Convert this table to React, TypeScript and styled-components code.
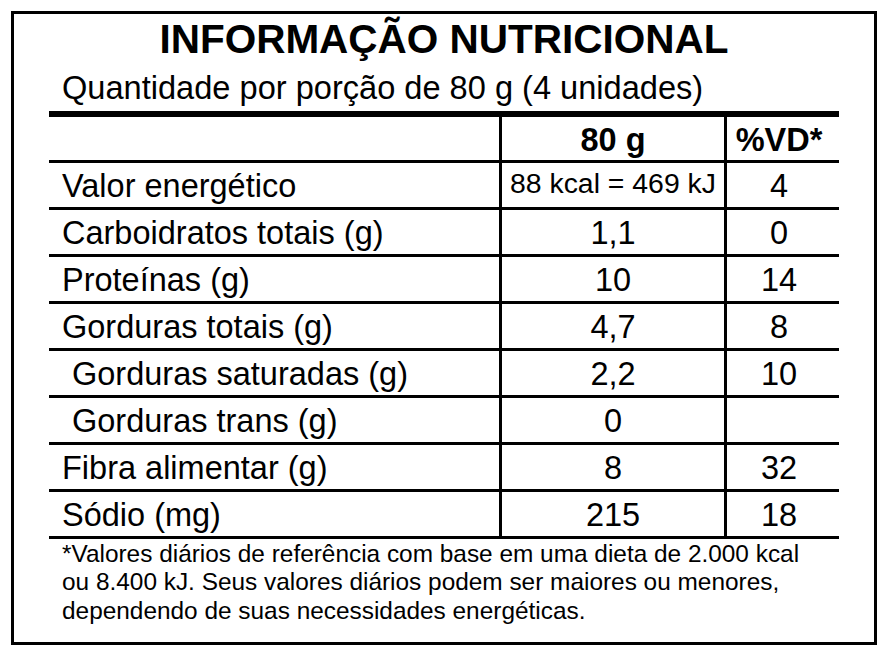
import React, {FC} from 'react';
import styled, {createGlobalStyle, css} from 'styled-components';

/*
 * Data.
 */

interface NutrientRow {
  label: string;
  amount: string;
  dailyValue: string;
  /** Sub-items of a nutrient are shifted to the right. */
  indented?: boolean;
  /** Long values use a smaller font so they fit the column. */
  compact?: boolean;
}

const rows: NutrientRow[] = [
  {label: 'Valor energético', amount: '88 kcal = 469 kJ', dailyValue: '4', compact: true},
  {label: 'Carboidratos totais (g)', amount: '1,1', dailyValue: '0'},
  {label: 'Proteínas (g)', amount: '10', dailyValue: '14'},
  {label: 'Gorduras totais (g)', amount: '4,7', dailyValue: '8'},
  {label: 'Gorduras saturadas (g)', amount: '2,2', dailyValue: '10', indented: true},
  {label: 'Gorduras trans (g)', amount: '0', dailyValue: '', indented: true},
  {label: 'Fibra alimentar (g)', amount: '8', dailyValue: '32'},
  {label: 'Sódio (mg)', amount: '215', dailyValue: '18'},
];

/*
 * Style.
 */

const GlobalStyle = createGlobalStyle`
  html, body {
    margin: 0;
    padding: 0;
    background: #ffffff;
  }
  body {
    font-family: "Liberation Sans", Arial, sans-serif;
    color: #000000;
  }
`;

const StyledLabelBoxDiv = styled.div`
  box-sizing: border-box;
  width: 866px;
  margin: 11px;
  border: 3px solid #000;
  padding: 3px 35px 17px;
  display: flex;
  flex-direction: column;
`;

const StyledTitleH1 = styled.h1`
  margin: 0;
  font-size: 40.5px;
  line-height: 44px;
  font-weight: 700;
  text-align: center;
`;

const StyledServingDiv = styled.div`
  margin-top: 9px;
  padding-left: 13px;
  font-size: 32.6px;
  line-height: 36px;
`;

const StyledTableDiv = styled.div`
  margin-top: 5px;
  border-top: 6px solid #000;
  display: flex;
  flex-direction: column;
`;

interface StyledRowDivProps {
  $isHeader?: boolean;
}

const StyledRowDiv = styled.div<StyledRowDivProps>`
  display: grid;
  grid-template-columns: 453px 225px 112px;
  height: 47px;
  box-sizing: border-box;
  border-bottom: 3px solid #000;

  ${p =>
    p.$isHeader &&
    css`
      height: 46px;
      font-weight: 700;
    `};
`;

interface StyledLabelCellDivProps {
  $indented?: boolean;
}

const StyledLabelCellDiv = styled.div<StyledLabelCellDivProps>`
  display: flex;
  align-items: center;
  padding-top: 2px;
  padding-left: ${p => (p.$indented ? '23px' : '13px')};
  border-right: 3px solid #000;
  font-size: 32.5px;
  line-height: 36px;
  white-space: nowrap;
`;

interface StyledValueCellDivProps {
  $compact?: boolean;
  $last?: boolean;
}

const StyledValueCellDiv = styled.div<StyledValueCellDivProps>`
  display: flex;
  align-items: center;
  justify-content: center;
  padding-top: 2px;
  font-size: 32.5px;
  line-height: 36px;
  white-space: nowrap;
  border-right: ${p => (p.$last ? 'none' : '3px solid #000')};
  padding-right: ${p => (p.$last ? '8px' : '0')};

  ${p =>
    p.$compact &&
    css`
      font-size: 28.4px;
      line-height: 32px;
      padding-top: 0;
      padding-bottom: 4px;
    `};
`;

const StyledFootnoteP = styled.p`
  margin: 0;
  padding-top: 1px;
  padding-left: 13px;
  font-size: 24.4px;
  line-height: 28.3px;
`;

/*
 * Component.
 */

const NutritionLabel: FC = () => (
  <StyledLabelBoxDiv>
    <StyledTitleH1>INFORMAÇÃO NUTRICIONAL</StyledTitleH1>
    <StyledServingDiv>Quantidade por porção de 80 g (4 unidades)</StyledServingDiv>
    <StyledTableDiv>
      <StyledRowDiv $isHeader>
        <StyledLabelCellDiv />
        <StyledValueCellDiv>80 g</StyledValueCellDiv>
        <StyledValueCellDiv $last>%VD*</StyledValueCellDiv>
      </StyledRowDiv>
      {rows.map(renderRow)}
    </StyledTableDiv>
    <StyledFootnoteP>
      *Valores diários de referência com base em uma dieta de 2.000 kcal
      <br />
      ou 8.400 kJ. Seus valores diários podem ser maiores ou menores,
      <br />
      dependendo de suas necessidades energéticas.
    </StyledFootnoteP>
  </StyledLabelBoxDiv>
);

export default function App() {
  return (
    <>
      <GlobalStyle />
      <NutritionLabel />
    </>
  );
}

/*
 * Helpers.
 */

function renderRow(row: NutrientRow) {
  return (
    <StyledRowDiv key={row.label}>
      <StyledLabelCellDiv $indented={row.indented}>{row.label}</StyledLabelCellDiv>
      <StyledValueCellDiv $compact={row.compact}>{row.amount}</StyledValueCellDiv>
      <StyledValueCellDiv $last>{row.dailyValue}</StyledValueCellDiv>
    </StyledRowDiv>
  );
}
